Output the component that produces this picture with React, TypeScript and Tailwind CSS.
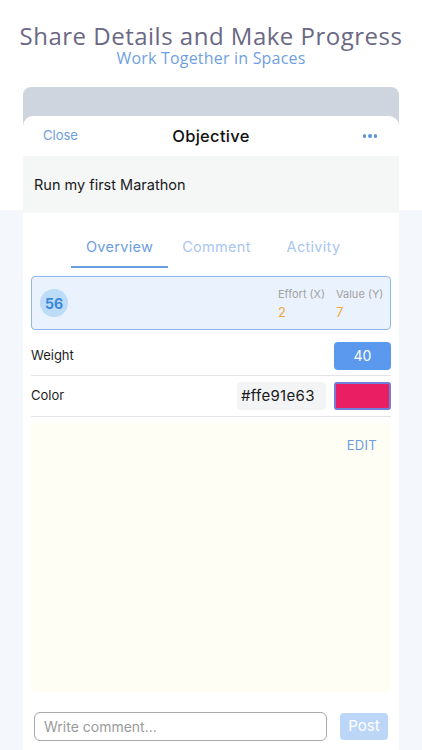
import React from 'react';

const sans = { fontFamily: 'Inter, "Noto Sans", sans-serif' };

function Tabs() {
  const tabs = ['Overview', 'Comment', 'Activity'];
  return (
    <div className="flex h-[55px] pl-[48px]">
      {tabs.map((t, i) => (
        <div
          key={t}
          className={`flex w-[97px] flex-col items-center justify-end ${i === 0 ? 'border-b-2 border-[#6b9de2]' : 'border-b-2 border-transparent'}`}
        >
          <span className={`mb-[8px] text-[14.5px] tracking-[0.3px] ${i === 0 ? 'text-[#6b9de2]' : 'text-[#a9c6ef]'}`}>
            {t}
          </span>
        </div>
      ))}
    </div>
  );
}

export default function App() {
  return (
    <div
      className="h-[750px] w-[422px] overflow-hidden bg-[linear-gradient(to_bottom,#ffffff_210px,#f4f8fd_210px)]"
      style={sans}
    >
      {/* heading */}
      <div className="flex flex-col items-center pt-[24px]" style={{ fontFamily: '"Open Sans", sans-serif' }}>
        <h1 className="text-[24px] leading-[24px] tracking-[0.5px] text-[#6a6884]">Share Details and Make Progress</h1>
        <p className="mt-[2px] text-[16px] leading-[16px] tracking-[0.2px] text-[#6f9fe2]">Work Together in Spaces</p>
      </div>

      {/* card */}
      <div className="mx-[23px] mt-[21px] rounded-t-[8px] bg-[#cfd5df] pt-[29px]">
        <div className="h-[650px] rounded-t-[10px] bg-white">
          <div className="flex h-[40px] items-center justify-between px-[20px]">
            <span className="w-[40px] text-[13px] text-[#6b9de2]">Close</span>
            <span className="text-[16.5px] font-medium tracking-[0.3px] text-[#111]">Objective</span>
            <span className="flex w-[40px] justify-end gap-[2px] pr-[2px]">
              <span className="h-[3.5px] w-[3.5px] rounded-full bg-[#5b95e0]" />
              <span className="h-[3.5px] w-[3.5px] rounded-full bg-[#5b95e0]" />
              <span className="h-[3.5px] w-[3.5px] rounded-full bg-[#5b95e0]" />
            </span>
          </div>

          <div className="flex h-[57px] items-center bg-[#f5f6f6] pl-[11px] text-[14.5px] text-[#1a1a1a]">
            Run my first Marathon
          </div>

          <Tabs />

          <div className="px-[8px] pt-[8px]">
            {/* score box */}
            <div className="flex h-[54px] items-center rounded-[4px] border-[1.5px] border-[#93b6eb] bg-[#eaf2fd] pl-[8px] pr-[6px]">
              <div className="flex h-[28px] w-[28px] items-center justify-center rounded-full bg-[#bcdcf8] text-[14px] font-bold text-[#3b86d8]">
                56
              </div>
              <div className="ml-auto flex gap-[10px] pt-[1px]">
                <div className="flex w-[48px] flex-col">
                  <span className="text-[11px] leading-[14px] text-[#a2a2a2]">Effort (X)</span>
                  <span className="mt-[3px] text-[13px] leading-[16px] text-[#f0a63a]">2</span>
                </div>
                <div className="flex w-[48px] flex-col">
                  <span className="text-[11px] leading-[14px] text-[#a2a2a2]">Value (Y)</span>
                  <span className="mt-[3px] text-[13px] leading-[16px] text-[#f0a63a]">7</span>
                </div>
              </div>
            </div>

            {/* weight */}
            <div className="flex h-[46px] items-center border-b border-[#e4e4e6] pt-[6px]">
              <span className="text-[13px] text-[#1e1e1e]">Weight</span>
              <span className="ml-auto flex h-[28px] w-[57px] items-center justify-center rounded-[4px] bg-[#5a99ee] text-[14px] text-white">
                40
              </span>
            </div>

            {/* color */}
            <div className="flex h-[41px] items-center border-b border-[#e4e4e6]">
              <span className="text-[13px] text-[#1e1e1e]">Color</span>
              <span className="ml-auto flex h-[28px] w-[89px] items-center rounded-[4px] bg-[#f3f4f5] pl-[4px] text-[15px] tracking-[0.3px] text-[#1a1a1a]">
                #ffe91e63
              </span>
              <span className="ml-[8px] h-[28px] w-[57px] rounded-[3px] border-2 border-[#6f7fd8] bg-[#e91e63]" />
            </div>

            {/* notes */}
            <div className="mt-[6px] flex h-[269px] justify-end rounded-[4px] bg-[#fffef4] pr-[14px] pt-[13px]">
              <span className="text-[13px] leading-[18px] tracking-[0.3px] text-[#6b9de2]">EDIT</span>
            </div>

            {/* comment */}
            <div className="mt-[20px] flex items-center pl-[3px] pr-[3px]">
              <div className="flex h-[29px] w-[293px] items-center rounded-[6px] border border-[#a9a9a9] pl-[9px] text-[14px] text-[#9a9a9a]">
                Write comment...
              </div>
              <div className="ml-auto flex h-[27px] w-[48px] items-center justify-center rounded-[4px] bg-[#bcd6f8] text-[15px] text-white">
                Post
              </div>
            </div>
          </div>
        </div>
      </div>
    </div>
  );
}
